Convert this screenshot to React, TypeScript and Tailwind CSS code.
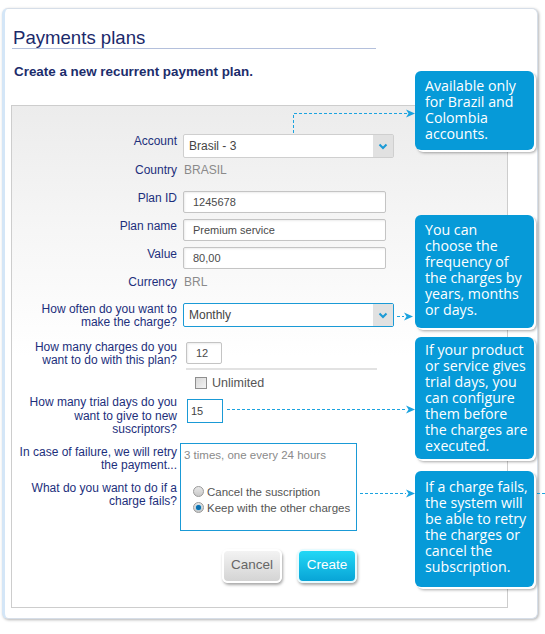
import React from "react";

const LBL = "w-[165px] shrink-0 text-right text-[12px] leading-[14px] text-[#1d2f7c]";
const LBL2 = "w-[165px] shrink-0 text-right text-[12px] leading-[13.5px] text-[#1d2f7c]";
const INPUT =
  "h-[22px] rounded-[2px] border border-[#c4c4c4] bg-white shadow-[inset_1px_1px_2px_rgba(0,0,0,0.08)] pl-[9px] text-[11px] leading-[20px] text-[#4a4a4a]";

function Chevron() {
  return (
    <svg width="10" height="7" viewBox="0 0 10 7">
      <path d="M1.5 1.5 L5 5 L8.5 1.5" fill="none" stroke="#1a9ad6" strokeWidth="2" />
    </svg>
  );
}

function Select({ value, active }: { value: string; active?: boolean }) {
  return (
    <div
      className={
        active
          ? "ml-[6px] flex h-[24px] w-[211px] rounded-[2px] border border-[#1a9ad6] bg-white"
          : "ml-[6px] flex h-[24px] w-[211px] rounded-[2px] border border-[#cfcfcf] bg-white"
      }
    >
      <div className="flex-1 pl-[5px] text-[12px] leading-[22px] text-[#444]">{value}</div>
      <div className="flex w-[20px] items-center justify-center bg-[#e1e1e1]">
        <Chevron />
      </div>
    </div>
  );
}

function Radio({ checked }: { checked?: boolean }) {
  return (
    <span className="flex h-[11px] w-[11px] shrink-0 items-center justify-center rounded-full border border-[#9a9a9a] bg-gradient-to-b from-[#e8e8e8] to-[#c8c8c8]">
      {checked ? <span className="h-[5px] w-[5px] rounded-full bg-[#0b6fae] shadow-[0_0_1px_#0af]" /> : null}
    </span>
  );
}

function Arrow({ x, y }: { x: number; y: number }) {
  return <path d={`M${x} ${y - 4} L${x + 9} ${y} L${x} ${y + 4} L${x + 2.5} ${y} Z`} fill="#1ba3df" />;
}

function Tip({ className, children }: { className: string; children: React.ReactNode }) {
  return (
    <div
      className={
        "absolute left-[410px] w-[119px] rounded-[6px] bg-[#069ad8] pl-[10px] font-['Open_Sans',sans-serif] text-[14.2px] leading-[16px] text-white shadow-[2px_2px_0_#ffffff,3px_3px_3px_rgba(0,0,0,0.35)] whitespace-nowrap " +
        className
      }
    >
      {children}
    </div>
  );
}

export default function App() {
  return (
    <div className="h-[634px] w-[545px] overflow-hidden bg-white pl-[2px] pt-[8px] font-['Liberation_Sans',Arial,sans-serif]">
      <div className="relative h-[611px] w-[536px] rounded-[6px] border border-[#d6dee8] border-l-[3px] border-l-[#d4e6f7] bg-white shadow-[1px_1px_3px_rgba(0,0,0,0.3)]">
        <div className="ml-[7px] w-[364px] border-b border-[#b4c0dc] pt-[18px]">
          <h1 className="pl-[1px] text-[18.6px] leading-[21px] text-[#1b2a6b]">Payments plans</h1>
        </div>
        <div className="ml-[9px] mt-[15px] text-[13.4px] font-bold leading-[16px] text-[#1c2d6c]">
          Create a new recurrent payment plan.
        </div>

        <div className="ml-[6px] mt-[25px] h-[503px] w-[497px] border border-[#cdcdcd] bg-[linear-gradient(to_bottom,#ececec,#f6f6f6_25%,#ffffff_50%)]">
          {/* Account */}
          <div className="mt-[28px] flex">
            <div className={LBL}>Account</div>
            <Select value="Brasil - 3" />
          </div>
          {/* Country */}
          <div className="mt-[5px] flex">
            <div className={LBL}>Country</div>
            <div className="ml-[6px] pl-[1px] text-[12px] leading-[14px] text-[#8a8a8a]">BRASIL</div>
          </div>
          {/* Plan ID */}
          <div className="mt-[14px] flex">
            <div className={LBL}>Plan ID</div>
            <div className={"ml-[6px] w-[203px] " + INPUT}>1245678</div>
          </div>
          <div className="mt-[6px] flex">
            <div className={LBL}>Plan name</div>
            <div className={"ml-[6px] w-[203px] " + INPUT}>Premium service</div>
          </div>
          <div className="mt-[6px] flex">
            <div className={LBL}>Value</div>
            <div className={"ml-[6px] w-[203px] " + INPUT}>80,00</div>
          </div>
          <div className="mt-[6px] flex">
            <div className={LBL}>Currency</div>
            <div className="ml-[6px] pl-[1px] text-[12px] leading-[14px] text-[#8a8a8a]">BRL</div>
          </div>
          {/* How often */}
          <div className="mt-[14px] flex">
            <div className="w-[165px] shrink-0 text-right text-[12px] leading-[13px] text-[#1d2f7c]">
              How often do you want to
              <br />
              make the charge?
            </div>
            <Select value="Monthly" active />
          </div>
          {/* How many charges */}
          <div className="mt-[12px] flex">
            <div className="w-[165px] shrink-0 text-right text-[12px] leading-[13px] text-[#1d2f7c]">
              How many charges do you
              <br />
              want to do with this plan?
            </div>
            <div className={"ml-[9px] mt-[1px] w-[36px] pl-[4px] " + INPUT}>12</div>
          </div>
          <div className="ml-[174px] mt-[1px] h-[2px] w-[191px] bg-[#e2e2e2]" />
          <div className="ml-[183px] mt-[6px] flex items-center">
            <span className="h-[12px] w-[12px] border border-[#8f8f8f] bg-gradient-to-br from-[#d8d8d8] to-[#f4f4f4]" />
            <span className="ml-[5px] text-[12.5px] leading-[14px] text-[#555]">Unlimited</span>
          </div>
          {/* Trial days */}
          <div className="mt-[6px] flex">
            <div className={LBL2}>
              How many trial days do you
              <br />
              want to give to new
              <br />
              suscriptors?
            </div>
            <div className="ml-[10px] mt-[3px] h-[24px] w-[36px] border border-[#1a9ad6] bg-white pl-[3px] text-[11px] leading-[22px] text-[#444]">
              15
            </div>
          </div>
          {/* Failure */}
          <div className="mt-[6px] flex">
            <div className={LBL2 + " pt-[3px]"}>
              In case of failure, we will retry
              <br />
              the payment...
              <div className="mt-[9px]">
                What do you want to do if a
                <br />
                charge fails?
              </div>
            </div>
            <div className="ml-[3px] h-[88px] w-[177px] shrink-0 border border-[#1a9ad6] bg-white pl-[3px] pt-[4px]">
              <div className="whitespace-nowrap text-[11.5px] leading-[14px] text-[#8a8a8a]">3 times, one every 24 hours</div>
              <div className="mt-[22px] flex items-center pl-[9px]">
                <Radio />
                <span className="ml-[3px] whitespace-nowrap text-[11.5px] leading-[16px] text-[#555]">Cancel the suscription</span>
              </div>
              <div className="flex items-center pl-[9px]">
                <Radio checked />
                <span className="ml-[3px] whitespace-nowrap text-[11.5px] leading-[16px] text-[#555]">Keep with the other charges</span>
              </div>
            </div>
          </div>
          {/* Buttons */}
          <div className="mt-[18px] flex gap-[15px] pl-[210px]">
            <button className="h-[34px] w-[60px] rounded-[6px] border-2 border-white bg-gradient-to-b from-[#f3f3f3] to-[#d4d4d4] text-[13.5px] text-[#666] shadow-[1px_2px_3px_rgba(0,0,0,0.35)]">
              Cancel
            </button>
            <button className="h-[34px] w-[60px] rounded-[6px] border-2 border-[#e6fbff] bg-gradient-to-b from-[#22d8f6] to-[#08a4d6] text-[13.5px] text-white shadow-[1px_2px_3px_rgba(0,0,0,0.35)]">
              Create
            </button>
          </div>
        </div>

        {/* Connectors */}
        <svg
          className="pointer-events-none absolute -left-[3px] -top-[9px] overflow-visible"
          width="545"
          height="634"
          viewBox="0 0 545 634"
        >
          <g stroke="#1ba3df" strokeWidth="1" strokeDasharray="3 2" fill="none">
            <path d="M291.5 133 V113.5 H405" />
            <path d="M395 316.5 H402" />
            <path d="M225 409.5 H404" />
            <path d="M358 493.5 H404" />
            <path d="M535 493.5 H545" />
          </g>
          <Arrow x={404} y={113.5} />
          <Arrow x={402} y={316.5} />
          <Arrow x={404} y={409.5} />
          <Arrow x={404} y={493.5} />
        </svg>

        {/* Tooltips */}
        <Tip className="top-[62px] h-[79px] pt-[7px]">
          Available only
          <br />
          for Brazil and
          <br />
          Colombia
          <br />
          accounts.
        </Tip>
        <Tip className="top-[206px] h-[113px] pt-[7px]">
          You can
          <br />
          choose the
          <br />
          frequency of
          <br />
          the charges by
          <br />
          years, months
          <br />
          or days.
        </Tip>
        <Tip className="top-[328px] h-[122px] pt-[5px]">
          If your product
          <br />
          or service gives
          <br />
          trial days, you
          <br />
          can configure
          <br />
          them before
          <br />
          the charges are
          <br />
          executed.
        </Tip>
        <Tip className="top-[462px] h-[116px] pt-[8px]">
          If a charge fails,
          <br />
          the system will
          <br />
          be able to retry
          <br />
          the charges or
          <br />
          cancel the
          <br />
          subscription.
        </Tip>
      </div>
    </div>
  );
}
